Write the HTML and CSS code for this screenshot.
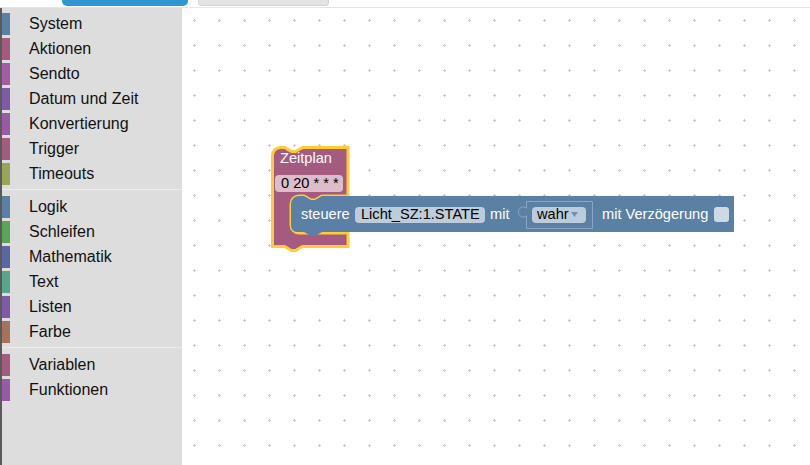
FILE: index.html
```html
<!DOCTYPE html>
<html lang="de">
<head>
<meta charset="utf-8">
<title>Blockly</title>
<link rel="stylesheet" href="styles.css">
</head>
<body>
<div class="topbar">
  <div class="tab tab-active"></div>
  <div class="tab tab-idle"></div>
</div>
<div class="main">
  <nav class="toolbox">
    <div class="cat"><span class="mark c-blue"></span>System</div>
    <div class="cat"><span class="mark c-rose"></span>Aktionen</div>
    <div class="cat"><span class="mark c-magenta"></span>Sendto</div>
    <div class="cat"><span class="mark c-violet"></span>Datum und Zeit</div>
    <div class="cat"><span class="mark c-purple"></span>Konvertierung</div>
    <div class="cat"><span class="mark c-rose"></span>Trigger</div>
    <div class="cat"><span class="mark c-olive"></span>Timeouts</div>
    <div class="sep"></div>
    <div class="cat"><span class="mark c-blue"></span>Logik</div>
    <div class="cat"><span class="mark c-green"></span>Schleifen</div>
    <div class="cat"><span class="mark c-indigo"></span>Mathematik</div>
    <div class="cat"><span class="mark c-teal"></span>Text</div>
    <div class="cat"><span class="mark c-violet"></span>Listen</div>
    <div class="cat"><span class="mark c-brown"></span>Farbe</div>
    <div class="sep"></div>
    <div class="cat"><span class="mark c-rose"></span>Variablen</div>
    <div class="cat"><span class="mark c-purple"></span>Funktionen</div>
  </nav>
  <div class="workspace">
    <svg class="ws" viewBox="182 8 628 457" width="628" height="457">
      <defs>
        <pattern id="grid" x="0" y="0" width="25" height="25" patternUnits="userSpaceOnUse">
          <rect x="18" y="20" width="3" height="1" fill="#c9c9c9"/>
          <rect x="19" y="19" width="1" height="3" fill="#c9c9c9"/>
        </pattern>
      </defs>
      <rect x="182" y="8" width="628" height="457" fill="#fff"/>
      <rect x="182" y="8" width="628" height="457" fill="url(#grid)"/>

      <!-- Zeitplan block -->
      <path class="blk-rose sel" d="M 272.5,155.5 A 8,8 0 0 1 280.5,147.5 H 284.5 l 7,4 4,0 7,-4 H 348 V 196 H 322 l -7,4 -4,0 -7,-4 H 299 A 8,8 0 0 0 291,204 V 225 A 8,8 0 0 0 299,233 H 348 V 246.5 H 302.5 l -7,4 -4,0 -7,-4 H 272.5 Z"/>
      <text class="bt lbl" x="280" y="163">Zeitplan</text>
      <rect class="fld" x="275" y="175" width="68" height="17" rx="4"/>
      <text class="bt dark" x="281" y="188">0 20 * * *</text>

      <!-- steuere block -->
      <path class="blk-blue" d="M 291,204 A 8,8 0 0 1 299,196 H 304 l 7,4 4,0 7,-4 H 734 V 232 H 322 l -7,4 -4,0 -7,-4 H 297 A 6,6 0 0 1 291,226 Z"/>
      <text class="bt lbl" x="301" y="219">steuere</text>
      <rect class="fld" x="355" y="207" width="130" height="16" rx="4"/>
      <text class="bt dark" x="361" y="219">Licht_SZ:1.STATE</text>
      <text class="bt lbl" x="490" y="219">mit</text>

      <!-- wahr child -->
      <path class="blk-child" d="M 526.5,201.5 H 592.5 V 228.5 H 526.5 V 216 C 521,219 518.5,215 518.5,212 S 521,205 526.5,208 Z"/>
      <rect class="fld" x="532" y="207" width="54" height="16" rx="4"/>
      <text class="bt dark" x="537" y="219">wahr</text>
      <path class="arrow" d="M 571,212 h 7 l -3.5,5 z"/>

      <text class="bt lbl" x="602" y="219">mit Verzögerung</text>
      <rect class="chk" x="714" y="207" width="15" height="15" rx="3"/>
    </svg>
  </div>
</div>
</body>
</html>
```
FILE: styles.css
```css
* { box-sizing: border-box; }
html, body {
  margin: 0;
  padding: 0;
  width: 810px;
  height: 465px;
  overflow: hidden;
  background: #fff;
  font-family: "Liberation Sans", Arial, sans-serif;
}
.topbar {
  height: 8px;
  display: flex;
  align-items: flex-start;
  padding-left: 62px;
  border-bottom: 1px solid #e6e6e6;
  background: #fff;
}
.tab { height: 6px; }
.tab-active {
  width: 126px;
  background: #2f96d4;
  border-radius: 0 0 5px 5px;
}
.tab-idle {
  width: 131px;
  margin-left: 10px;
  background: #e3e3e3;
  border: 1px solid #d3d3d3;
  border-top: none;
  border-radius: 0 0 4px 4px;
}
.main {
  display: flex;
  height: 457px;
}
.toolbox {
  width: 182px;
  flex: none;
  background: #dddddd;
  border-left: 2px solid #5a5a5a;
  padding-top: 3px;
}
.cat {
  height: 25px;
  display: flex;
  align-items: center;
  font-size: 16px;
  color: #111;
}
.mark {
  width: 8px;
  height: 22px;
  margin-right: 19px;
  flex: none;
}
.sep {
  height: 8px;
  padding-top: 3px;
}
.sep::before {
  content: "";
  display: block;
  height: 1px;
  background: #ececec;
}
.c-blue { background: #5b80a5; }
.c-rose { background: #a55b80; }
.c-magenta { background: #a55ba5; }
.c-violet { background: #7e5ba5; }
.c-purple { background: #995ba5; }
.c-olive { background: #9aa55b; }
.c-green { background: #5ba55b; }
.c-indigo { background: #5b67a5; }
.c-teal { background: #5ba58c; }
.c-brown { background: #a5745b; }

.workspace {
  flex: 1;
  position: relative;
  overflow: hidden;
}
.ws { display: block; }
.blk-rose { fill: #a55b80; }
.sel { stroke: #fc3; stroke-width: 3; }
.blk-blue { fill: #5b80a5; }
.blk-child { fill: #5b80a5; stroke: #8ba5c1; stroke-width: 1; }
.bt {
  font-family: "Liberation Sans", Arial, sans-serif;
  font-size: 14.6px;
}
.lbl { fill: #fff; }
.dark { fill: #000; }
.fld { fill: #fff; fill-opacity: 0.6; }
.chk { fill: #fff; fill-opacity: 0.7; }
.arrow { fill: #6f8fb2; }
```
